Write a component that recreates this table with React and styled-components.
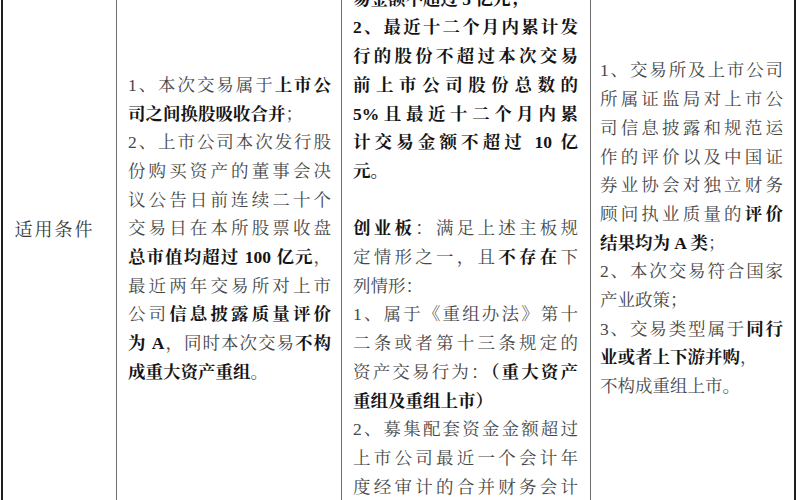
import React from 'react';
import styled, { createGlobalStyle } from 'styled-components';

const Global = createGlobalStyle`
  html, body {
    margin: 0;
    padding: 0;
    background: #ffffff;
  }
  #root {
    width: 800px;
    height: 500px;
    overflow: hidden;
  }
`;

const Table = styled.div`
  display: grid;
  grid-template-columns: 113px 225px 249px 204px;
  align-items: center;
  width: fit-content;
  margin: -48px 0 0 1px;
  border-left: 2px solid #1e1e1e;
  border-right: 2px solid #1e1e1e;
  font-family: "Liberation Serif", "Noto Serif CJK SC", "Noto Sans CJK SC", serif;
  font-size: 17.5px;
  line-height: 28.7px;
  color: #474747;
`;

const Cell = styled.div`
  align-self: stretch;
  display: flex;
  align-items: center;
  justify-content: ${p => (p.$center ? 'center' : 'flex-start')};
  padding: ${p => p.$pad || '4px 10px'};
  border-left: ${p => (p.$first ? 'none' : '1px solid #6e6e6e')};
`;

const Label = styled.div`
  font-size: 18px;
  letter-spacing: 2px;
  color: #3a3a3a;
  margin: 4px 10px 0 0;
`;

const Body = styled.div`
  width: 100%;
`;

const Line = styled.span`
  display: block;
  white-space: nowrap;
  text-align: justify;
  text-align-last: ${p => (p.$end ? 'left' : 'justify')};
`;

const B = styled.b`
  font-weight: 700;
  color: #141414;
`;

export default function App() {
  return (
    <>
      <Global />
      <Table>
        <Cell $first $center>
          <Label>适用条件</Label>
        </Cell>

        <Cell $pad="4px 10px 4px 11px">
          <Body>
            <Line>1、本次交易属于<B>上市公</B></Line>
            <Line $end><B>司之间换股吸收合并</B>；</Line>
            <Line>2、上市公司本次发行股</Line>
            <Line>份购买资产的董事会决</Line>
            <Line>议公告日前连续二十个</Line>
            <Line>交易日在本所股票收盘</Line>
            <Line><B>总市值均超过 100 亿元</B>，</Line>
            <Line>最近两年交易所对上市</Line>
            <Line>公司<B>信息披露质量评价</B></Line>
            <Line><B>为 A</B>，同时本次交易<B>不构</B></Line>
            <Line $end><B>成重大资产重组</B>。</Line>
          </Body>
        </Cell>

        <Cell $pad="4px 12px 4px 11px">
          <Body>
            <Line><B>1、最近十二个月内累计交</B></Line>
            <Line $end><B>易金额不超过 5 亿元；</B></Line>
            <Line><B>2、最近十二个月内累计发</B></Line>
            <Line><B>行的股份不超过本次交易</B></Line>
            <Line><B>前上市公司股份总数的</B></Line>
            <Line><B>5%且最近十二个月内累</B></Line>
            <Line><B>计交易金额不超过 10 亿</B></Line>
            <Line $end><B>元。</B></Line>
            <Line $end>&nbsp;</Line>
            <Line><B>创业板</B>：满足上述主板规</Line>
            <Line>定情形之一，且<B>不存在</B>下</Line>
            <Line $end>列情形：</Line>
            <Line>1、属于《重组办法》第十</Line>
            <Line>二条或者第十三条规定的</Line>
            <Line>资产交易行为：<B>（重大资产</B></Line>
            <Line $end><B>重组及重组上市）</B></Line>
            <Line>2、募集配套资金金额超过</Line>
            <Line>上市公司最近一个会计年</Line>
            <Line>度经审计的合并财务会计</Line>
          </Body>
        </Cell>

        <Cell $pad="4px 11px 4px 9px">
          <Body>
            <Line>1、交易所及上市公司</Line>
            <Line>所属证监局对上市公</Line>
            <Line>司信息披露和规范运</Line>
            <Line>作的评价以及中国证</Line>
            <Line>券业协会对独立财务</Line>
            <Line>顾问执业质量的<B>评价</B></Line>
            <Line $end><B>结果均为 A 类</B>；</Line>
            <Line>2、本次交易符合国家</Line>
            <Line $end>产业政策；</Line>
            <Line>3、交易类型属于<B>同行</B></Line>
            <Line $end><B>业或者上下游并购</B>，</Line>
            <Line $end>不构成重组上市。</Line>
          </Body>
        </Cell>
      </Table>
    </>
  );
}
